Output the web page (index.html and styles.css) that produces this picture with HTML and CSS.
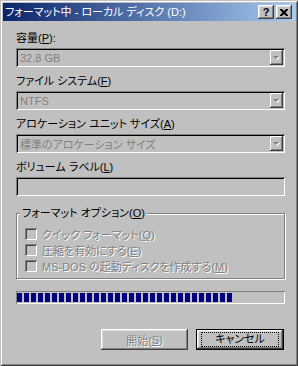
FILE: index.html
```html
<!DOCTYPE html>
<html lang="ja">
<head>
    <meta charset="UTF-8">
    <title>フォーマット中 - ローカル ディスク (D:)</title>
    <link rel="stylesheet" href="styles.css">
</head>
<body>
    <div class="window">
        <!-- Title bar -->
        <div class="titlebar">
            <span class="title">フォーマット中 - ローカル ディスク (D:)</span>
            <div class="title-buttons">
                <span class="tbtn help">?</span>
                <span class="tbtn">
                    <svg width="8" height="7" viewBox="0 0 8 7">
                        <path d="M0 0h2l2 2 2-2h2v1l-2.5 2.5 2.5 2.5v1h-2l-2-2-2 2h-2v-1l2.5-2.5-2.5-2.5z" fill="#000"/>
                    </svg>
                </span>
            </div>
        </div>

        <div class="content">
            <div class="field">
                <div class="label">容量(<u>P</u>):</div>
                <div class="combo">
                    <span class="combo-text">32.8 GB</span>
                    <span class="combo-arrow"></span>
                </div>
            </div>

            <div class="field">
                <div class="label">ファイル システム(<u>F</u>)</div>
                <div class="combo">
                    <span class="combo-text">NTFS</span>
                    <span class="combo-arrow"></span>
                </div>
            </div>

            <div class="field">
                <div class="label">アロケーション ユニット サイズ(<u>A</u>)</div>
                <div class="combo">
                    <span class="combo-text">標準のアロケーション サイズ</span>
                    <span class="combo-arrow"></span>
                </div>
            </div>

            <div class="field">
                <div class="label">ボリューム ラベル(<u>L</u>)</div>
                <div class="textbox"></div>
            </div>

            <!-- Format options -->
            <fieldset class="group">
                <legend>フォーマット オプション(<u>O</u>)</legend>
                <div class="check">
                    <span class="box"></span>
                    <span class="check-label">クイック フォーマット(<u>Q</u>)</span>
                </div>
                <div class="check">
                    <span class="box"></span>
                    <span class="check-label">圧縮を有効にする(<u>E</u>)</span>
                </div>
                <div class="check">
                    <span class="box"></span>
                    <span class="check-label">MS-DOS の起動ディスクを作成する(<u>M</u>)</span>
                </div>
            </fieldset>

            <div class="progress">
                <div class="progress-fill" style="width: 215px"></div>
            </div>

            <div class="buttons">
                <div class="btn disabled">開始(<u>S</u>)</div>
                <div class="btn default"><span class="focus">キャンセル</span></div>
            </div>
        </div>
    </div>
</body>
</html>
```

FILE: styles.css
```css
body {
    margin: 0;
    background: #c0c0c0;
    font-family: "Liberation Sans", "Noto Sans CJK JP", sans-serif;
    font-size: 11px;
    font-feature-settings: "palt" 1;
    color: #000;
}

.window {
    width: 298px;
    height: 366px;
    box-sizing: border-box;
    background: #c0c0c0;
    padding: 3px;
    box-shadow: inset 1px 1px 0 #c0c0c0, inset -1px -1px 0 #404040,
                inset 2px 2px 0 #fff, inset -2px -2px 0 #808080;
}

.titlebar {
    height: 18px;
    display: flex;
    align-items: center;
    justify-content: space-between;
    padding: 0 3px 0 2px;
    background: linear-gradient(90deg, #0a246a, #a6caf0);
    color: #fff;
}

.title {
    font-size: 11px;
    line-height: 18px;
    white-space: nowrap;
}

.title-buttons {
    display: flex;
    gap: 2px;
}

.tbtn {
    width: 16px;
    height: 14px;
    box-sizing: border-box;
    background: #c0c0c0;
    display: flex;
    align-items: center;
    justify-content: center;
    box-shadow: inset -1px -1px 0 #404040, inset 1px 1px 0 #fff,
                inset -2px -2px 0 #808080, inset 2px 2px 0 #dfdfdf;
}

.help {
    color: #000;
    font-weight: bold;
    font-size: 11px;
    line-height: 14px;
    font-family: "Liberation Sans", sans-serif;
}

.content {
    padding: 11px 10px 0 13px;
}

.field {
    margin-bottom: 8px;
}

.label {
    line-height: 12px;
    height: 12px;
    margin-bottom: 4px;
    white-space: nowrap;
}

.combo, .textbox {
    height: 19px;
    box-sizing: border-box;
    display: flex;
    align-items: center;
    justify-content: space-between;
    padding: 2px;
    background: #c0c0c0;
    box-shadow: inset 1px 1px 0 #808080, inset -1px -1px 0 #fff,
                inset 2px 2px 0 #000, inset -2px -2px 0 #c0c0c0;
}

.combo-text {
    padding-left: 2px;
    color: #808080;
    white-space: nowrap;
}

.combo-arrow {
    width: 13px;
    height: 15px;
    position: relative;
    box-shadow: inset -1px -1px 0 #404040, inset 1px 1px 0 #fff,
                inset -2px -2px 0 #808080;
}

.combo-arrow::after {
    content: "";
    position: absolute;
    left: 3px;
    top: 6px;
    border-left: 3px solid transparent;
    border-right: 3px solid transparent;
    border-top: 3px solid #808080;
    filter: drop-shadow(1px 1px 0 #fff);
}

.group {
    margin: 11px 0 0 0;
    padding: 7px 8px 4px 8px;
    border: 1px solid #808080;
    box-shadow: inset 1px 1px 0 #fff, 1px 1px 0 #fff;
}

.group legend {
    padding: 0 2px;
    margin-left: -5px;
    line-height: 12px;
    background: #c0c0c0;
}

.check {
    display: flex;
    align-items: center;
    gap: 5px;
    height: 16px;
}

.box {
    width: 12px;
    height: 12px;
    box-sizing: border-box;
    box-shadow: inset 1px 1px 0 #808080, inset -1px -1px 0 #fff,
                inset 2px 2px 0 #404040, inset -2px -2px 0 #c0c0c0;
}

.check-label, .btn.disabled {
    color: #808080;
    text-shadow: 1px 1px 0 #fff;
    white-space: nowrap;
}

.progress {
    margin-top: 12px;
    height: 13px;
    box-sizing: border-box;
    padding: 2px 1px;
    box-shadow: inset 1px 1px 0 #808080, inset -1px -1px 0 #fff;
}

.progress-fill {
    height: 9px;
    background: repeating-linear-gradient(90deg, #000080 0 5px, transparent 5px 7px);
}

.buttons {
    display: flex;
    justify-content: flex-end;
    gap: 8px;
    margin-top: 25px;
    padding-right: 1px;
}

.btn {
    width: 87px;
    height: 21px;
    box-sizing: border-box;
    display: flex;
    align-items: center;
    justify-content: center;
    box-shadow: inset -1px -1px 0 #404040, inset 1px 1px 0 #fff,
                inset -2px -2px 0 #808080, inset 2px 2px 0 #dfdfdf;
}

.btn.default {
    width: 88px;
    border: 1px solid #000;
}

.focus {
    width: 76px;
    height: 13px;
    line-height: 13px;
    text-align: center;
    outline: 1px dotted #000;
}
```
